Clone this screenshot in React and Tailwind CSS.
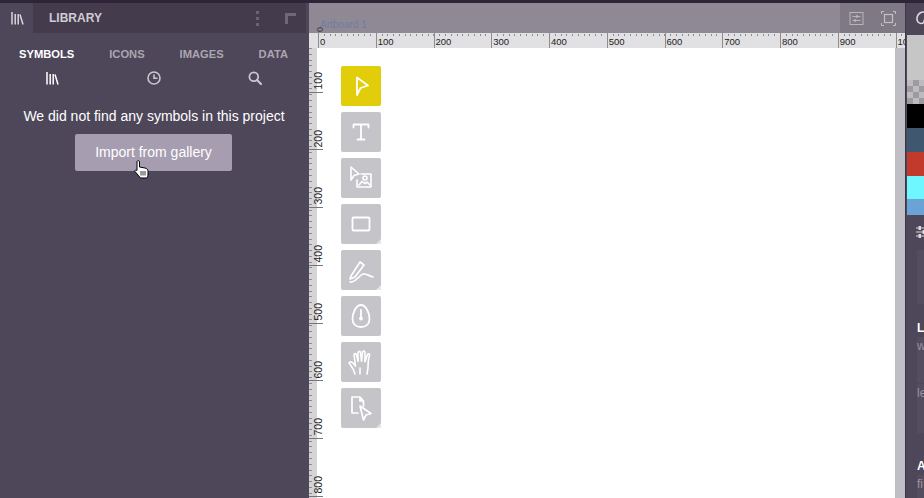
import React from "react";

const font = { fontFamily: '"Liberation Sans", Arial, sans-serif' };

const I = ({ children, size = 24, sw = 1.6 }) => (
  <svg width={size} height={size} viewBox={`0 0 ${size} ${size}`} fill="none" stroke="white" strokeWidth={sw} strokeLinejoin="round" strokeLinecap="round">
    {children}
  </svg>
);

const LibIcon = ({ color }) => (
  <svg width="13" height="14" viewBox="0 0 13 14" fill="none" stroke={color} strokeWidth="1.5">
    <path d="M1 1 V13.5 M4.2 3 V13.5 M7.2 3 V13.5 M9 3.5 L12 13.5" />
  </svg>
);

const tools = [
  <I key="a" sw={1.8}><path d="M8 3.5 L19 11.5 L11.5 14 L8 21 Z" /></I>,
  <I key="b" size={18} sw={1.8}><path d="M1.5 4.5 V1.5 H16.5 V4.5 M9 1.5 V16.5 M5.5 16.5 H12.5" /></I>,
  <I key="c" size={26} sw={1.6}><path d="M3 2 L11 9 L6 10.5 L3 15 Z" /><path d="M13 9 H23 V22 H9 V15" /><circle cx="17" cy="13" r="2" /><path d="M11 20 L14 16.5 L17 18.5 L19 17 L22 20" /></I>,
  <I key="d" sw={1.8}><rect x="3.5" y="5.5" width="17" height="13" rx="1" /></I>,
  <I key="e" size={28} sw={1.7}><path d="M4 20 L13 6 L17 9 L8 21 L3 23 Z" /><path d="M3 26 C9 27 12 19 16 18 C19 17.5 22 20 26 21" /></I>,
  <I key="f" size={26} sw={1.8}><path d="M13 2 C18 2 21.5 10 21.5 16 C21.5 21 18 24 13 24 C8 24 4.5 21 4.5 16 C4.5 10 8 2 13 2 Z" /><path d="M13 7 V14" /><circle cx="13" cy="15.5" r="1" fill="white" /></I>,
  <I key="g" size={28} sw={1.6}><path d="M8 26 C7 21 4 18 2 15 C3 13 5 14 7 16 L8.5 18" /><path d="M8.5 18 L7 7 C7 5 9 5 9.5 7 L11 13" /><path d="M11 13 L11 4.5 C11.5 3 13.5 3 13.5 4.5 L14.5 13" /><path d="M14.5 13 L15.5 4 C16 2.5 18 3 18 4.5 L18 13.5" /><path d="M18 13.5 L20.5 6.5 C21.5 5 23 6 22.5 7.5 C21 12 21 16 21 20 L20 26" /><path d="M13 20 L13 26" /></I>,
  <I key="h" size={26} sw={1.7}><path d="M10 18 H4 V2 H12 L15.5 6 V11 M12 2 V6 H15.5" /><path d="M12 11 L23 18.5 L18 20 L15.5 25 Z" /></I>,
];

const rulerH = Array.from({ length: 11 }, (_, i) => i * 100);
const rulerV = [100, 200, 300, 400, 500, 600, 700, 800];
const withCorner = [3, 4, 7];

export default function App() {
  return (
    <div style={font} className="w-[924px] h-[498px] overflow-hidden flex flex-col bg-[#2f2539]">
      <div className="h-[3px] shrink-0" />
      <div className="flex flex-1 min-h-0">
        {/* left panel */}
        <aside className="relative w-[309px] shrink-0 bg-[#4e4659] flex flex-col">
          <div className="h-[30px] flex shrink-0">
            <div className="w-[33px] flex items-center justify-center pl-[1px]">
              <LibIcon color="#d9d6dc" />
            </div>
            <div className="w-[273px] bg-[#443b4d] flex items-center pl-4">
              <span className="text-[12px] font-bold text-[#cfccd4]">LIBRARY</span>
              <div className="ml-auto flex items-center mr-[10px]">
                <div className="flex flex-col gap-[3px] mr-[26px]">
                  <span className="w-[3px] h-[3px] bg-[#6a6374]" />
                  <span className="w-[3px] h-[3px] bg-[#6a6374]" />
                  <span className="w-[3px] h-[3px] bg-[#6a6374]" />
                </div>
                <div className="w-[11px] h-[11px] border-l-[3px] border-t-[3px] border-[#6f6879]" />
              </div>
            </div>
          </div>
          <div className="flex justify-between pl-[19px] pr-[21px] pt-[15px] text-[11.2px] leading-[13px] font-bold text-[#aaa6b0]">
            <span className="text-white">SYMBOLS</span>
            <span>ICONS</span>
            <span>IMAGES</span>
            <span>DATA</span>
          </div>
          <div className="flex pt-[9px] h-[24px] items-center">
            <div className="w-[104px] pl-[46px] flex"><LibIcon color="#ffffff" /></div>
            <div className="w-[100px] pl-[43px] flex">
              <svg width="14" height="14" viewBox="0 0 14 14" fill="none" stroke="#c9c6ce" strokeWidth="1.6">
                <circle cx="7" cy="7" r="6" />
                <path d="M7 3.5 V7.2 H10.5" />
              </svg>
            </div>
            <div className="pl-[44px] flex">
              <svg width="14" height="14" viewBox="0 0 14 14" fill="none" stroke="#c9c6ce" strokeWidth="1.8" strokeLinecap="round">
                <circle cx="5.8" cy="5.8" r="4.4" />
                <path d="M9 9 L13 13" strokeWidth="2.2" />
              </svg>
            </div>
          </div>
          <p className="mt-[22px] text-center text-[14px] leading-[18px] text-white pr-[1px]">We did not find any symbols in this project</p>
          <button className="mt-[9px] ml-[75px] w-[157px] h-[37px] rounded-[2px] bg-[#a69db0] text-[14px] text-white">Import from gallery</button>
          <svg className="absolute left-[134px] top-[157px]" width="15" height="19" viewBox="0 0 15 19">
            <path d="M3 1.5 C3 .5 5.5 .5 5.5 1.5 V7 L11 8 C13 8.5 14 9.5 14 11 V14 C14 16 13.5 17 12.5 18 H6.5 L1 11.5 C.5 10 2 9.5 3 10.5 Z" fill="white" stroke="black" strokeWidth="1" />
            <path d="M7 11 V15.5 M9 11 V15.5 M11 11 V15.5" stroke="black" strokeWidth="0.8" />
          </svg>
        </aside>

        {/* centre */}
        <main className="w-[596px] shrink-0 flex flex-col min-w-0">
          <div className="h-[30px] shrink-0 flex bg-[#8f8995]">
            <div className="flex-1 flex items-end pl-[6px] pb-[1px]">
              <span className="text-[9px] leading-[10px] text-[#3a3a40] [writing-mode:vertical-rl] rotate-180">0</span>
              <span className="-ml-[5px] mb-[1px] text-[10px] leading-[12px] text-[#6f7da0]">Artboard 1</span>
            </div>
            <div className="w-[65px] bg-[#7f7986] flex items-center pl-[9px] gap-[17px]">
              <svg width="15" height="15" viewBox="0 0 15 15" fill="none" stroke="#b9b5bd" strokeWidth="1">
                <rect x="1" y="1.5" width="13" height="12" />
                <path d="M3.5 5.5 H11.5 M3.5 9.5 H11.5" />
                <path d="M8 4 V7 M6 8 V11" strokeWidth="1.4" />
              </svg>
              <svg width="15" height="15" viewBox="0 0 15 15" fill="none" stroke="#c2bfc6" strokeWidth="1">
                <rect x="3.5" y="3.5" width="8" height="8" strokeWidth="1.2" />
                <path d="M.5 3 V.5 H3 M12 .5 H14.5 V3 M14.5 12 V14.5 H12 M3 14.5 H.5 V12" />
              </svg>
            </div>
          </div>
          <div className="relative h-[15px] shrink-0 bg-[#e1e1e3] pl-[9px] flex overflow-hidden">
            <div className="absolute left-0 right-0 top-[1px] h-[2px] bg-[repeating-linear-gradient(90deg,#8b8b90_0_1px,transparent_1px_5.775px)] ml-[9px]" />
            {rulerH.map((n) => (
              <div key={n} className="w-[57.75px] shrink-0 border-l border-[#8d8d91] pl-[1px] text-[9.5px] leading-[18px] text-[#222]">{n === 1000 ? "10" : n}</div>
            ))}
          </div>
          <div className="flex flex-1 min-h-0">
            <div className="relative w-[8px] shrink-0 bg-[#d5d5d8]">
              <div className="absolute left-0 top-0 bottom-0 w-[3px] bg-[repeating-linear-gradient(180deg,#8b8b90_0_1px,transparent_1px_5.775px)]" />
              <div className="relative flex flex-col">
                {rulerV.map((n, i) => (
                  <div key={n} className={`${i === 0 ? "h-[44.5px]" : "h-[57.75px]"} w-[14px] shrink-0 border-b border-[#77777b] flex justify-end items-end`}>
                    <span className="[writing-mode:vertical-rl] rotate-180 text-[10.5px] leading-[11px] text-[#222] pt-[2px] -mr-[1px]">{n}</span>
                  </div>
                ))}
              </div>
            </div>
            <div className="flex-1 bg-white pl-[24px] pt-[18px] flex flex-col gap-[6px]">
              {tools.map((t, i) => (
                <div key={i} className={`relative w-[40px] h-[40px] rounded-[2px] flex items-center justify-center ${i === 0 ? "bg-[#e2cd0b]" : "bg-[#c4c4c9]"}`}>
                  {t}
                  {withCorner.includes(i) && (
                    <svg className="absolute right-0 bottom-0" width="5" height="5" viewBox="0 0 5 5"><path d="M5 0 V5 H0 Z" fill="#e6e6e9" /></svg>
                  )}
                </div>
              ))}
            </div>
            <div className="w-[10px] shrink-0 bg-[#bfbfc5]" />
          </div>
        </main>

        {/* right */}
        <aside className="flex-1 min-w-0 bg-[#4e4659] flex flex-col overflow-hidden pl-[1px] border-l border-[#3e3648]">
          <div className="h-[30px] shrink-0 flex items-center pl-[9px]">
            <svg width="14" height="14" viewBox="0 0 14 14" fill="none" stroke="#dcd9df" strokeWidth="1.6" className="shrink-0">
              <path d="M13 4 C11 1 7 0 4 2 C1 4 0 8 2 11 C4 13 7 13 8 11 C8 9 9 8 11 8 C13 8 14 6 13 4 Z" />
            </svg>
          </div>
          <div className="h-[2px] shrink-0" />
          <div className="h-[45px] shrink-0 bg-[#c6c6c6]" />
          <div className="h-[24px] shrink-0 bg-[repeating-conic-gradient(#9d9b9f_0_25%,#bdbbbe_0_50%)] bg-[length:12px_12px]" />
          <div className="h-[24px] shrink-0 bg-black" />
          <div className="h-[24px] shrink-0 bg-[#3f5870]" />
          <div className="h-[24px] shrink-0 bg-[#c23a2c]" />
          <div className="h-[23px] shrink-0 bg-[#6ff7ff]" />
          <div className="h-[16px] shrink-0 bg-[#6ba3d6]" />
          <div className="h-[11px] shrink-0" />
          <svg width="12" height="12" viewBox="0 0 12 12" fill="#d8d5db" stroke="#d8d5db" strokeWidth="1" className="ml-[9px] shrink-0">
            <path d="M0 2 H12 M0 6 H12 M0 10 H12" />
            <rect x="3" y="0.5" width="1.5" height="3" />
            <rect x="7" y="4.5" width="1.5" height="3" />
            <rect x="3" y="8.5" width="1.5" height="3" />
          </svg>
          <div className="mt-[12px] ml-[10px] h-[54px] shrink-0 bg-[#544c5f]" />
          <div className="mt-[17px] pl-[10px] text-[12px] leading-[14px] font-bold text-white">L</div>
          <div className="mt-[2px] ml-[10px] h-[46px] shrink-0 bg-[#544c5f] text-[12px] leading-[18px] text-[#9a95a1]">w</div>
          <div className="mt-[1px] ml-[10px] h-[49px] shrink-0 bg-[#544c5f] text-[12px] leading-[18px] text-[#9a95a1]">le</div>
          <div className="mt-[26px] pl-[10px] text-[12px] leading-[14px] font-bold text-white">A</div>
          <div className="mt-[2px] ml-[10px] h-[30px] shrink-0 bg-[#544c5f] text-[12px] leading-[18px] text-[#9a95a1]">fi</div>
        </aside>
      </div>
    </div>
  );
}
